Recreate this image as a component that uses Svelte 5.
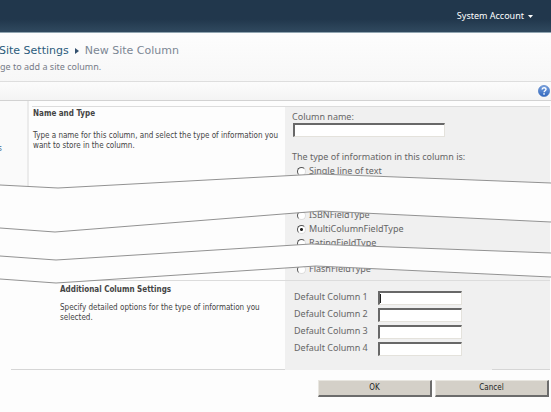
<script>
  let columnName = $state('');
  let fieldType = $state('MultiColumnFieldType');
  let defaults = $state(['', '', '', '']);

  const typeGroups = [
    ['Single line of text'],
    ['ISBNFieldType', 'MultiColumnFieldType', 'RatingFieldType'],
    ['FlashFieldType']
  ];
</script>

<div class="page">
  <header class="topbar">
    <button class="account" type="button">
      System Account
      <svg width="5" height="3" viewBox="0 0 5 3" aria-hidden="true"><path d="M0 0H5L2.500 3Z" fill="#fff" /></svg>
    </button>
  </header>

  <div class="title">
    <nav>
      <a href="#settings">Site Settings</a>
      <svg width="4" height="6" viewBox="0 0 4 6" aria-hidden="true"><path d="M0 0L4 3L0 6Z" fill="#33506e" /></svg>
      <span>New Site Column</span>
    </nav>
    <p>ge to add a site column.</p>
  </div>

  <div class="ribbon">
    <button class="help" type="button" aria-label="Help">
      <svg width="12" height="12" viewBox="0 0 12 12">
        <defs>
          <linearGradient id="ball" x1="0" y1="0" x2="0" y2="1">
            <stop offset="0" stop-color="#7ba3e0" />
            <stop offset="1" stop-color="#2f66bd" />
          </linearGradient>
        </defs>
        <circle cx="6" cy="6" r="5.600" fill="url(#ball)" stroke="#4474bf" stroke-width=".6" />
        <path d="M4.100 4.500C4.100 2.300 8 2.200 8 4.300C8 5.700 6.100 5.700 6.100 7.300" fill="none" stroke="#fff" stroke-width="1.400" />
        <rect x="5.300" y="8.200" width="1.500" height="1.500" fill="#fff" />
      </svg>
    </button>
  </div>

  <div class="body">
    <aside><a href="#lists">s</a></aside>

    <form onsubmit={(e) => e.preventDefault()}>
      <section class="row first">
        <div class="about">
          <h2>Name and Type</h2>
          <p>Type a name for this column, and select the type of information you want to store in the column.</p>
        </div>
        <div class="fields">
          <label class="name" for="column-name">Column name:</label>
          <input class="box wide" id="column-name" type="text" bind:value={columnName} />
          <p class="prompt">The type of information in this column is:</p>
          {#each typeGroups as group}
            <div class="group">
              {#each group as type}
                <label class="option">
                  <input type="radio" name="type" value={type} bind:group={fieldType} />
                  {type}
                </label>
              {/each}
            </div>
          {/each}
        </div>
      </section>

      <section class="row second">
        <div class="about">
          <h2>Additional Column Settings</h2>
          <p>Specify detailed options for the type of information you selected.</p>
        </div>
        <div class="fields">
          {#each defaults as _, i}
            <div class="default">
              <label for="default-{i}">Default Column {i + 1}</label>
              <span class="entry">
                <input class="box" id="default-{i}" type="text" bind:value={defaults[i]} />
                {#if i === 0}<i class="caret"></i>{/if}
              </span>
            </div>
          {/each}
        </div>
      </section>

      <div class="actions">
        <button type="submit">OK</button>
        <button type="button">Cancel</button>
      </div>
    </form>

    <!-- torn paper strips over the shortened list -->
    <svg class="tears" viewBox="0 0 551 120" preserveAspectRatio="none" aria-hidden="true">
      <path class="gap" d="M0 15L58 18L319 4L551 13V52L321 41L55 62L0 58Z" />
      <path class="gap" d="M0 86L56 90L311 74L551 83V107L316 96L56 113L0 109Z" />
      <path class="edge" d="M0 15L58 18L319 4L551 13M0 58L55 62L321 41L551 52M0 86L56 90L311 74L551 83M0 109L56 113L316 96L551 107" />
    </svg>
  </div>
</div>

<style>
  :global(body) {
    margin: 0;
    background: #fdfdfd;
  }
  .page {
    overflow: hidden;
    min-height: 100vh;
    background: #fdfdfd;
    color: #666;
    font: 9px/14px 'Noto Sans', Verdana, sans-serif;
  }
  h2, p {
    margin: 0;
  }
  a {
    text-decoration: none;
  }
  button {
    font: inherit;
    padding: 0;
  }
  svg {
    display: block;
  }
  .topbar {
    display: flex;
    justify-content: flex-end;
    align-items: center;
    box-sizing: border-box;
    height: 33px;
    padding-right: 18px;
    background: linear-gradient(#21374c 60%, #30495f);
    border-bottom: 1px solid #91a5b1;
  }
  .account {
    display: flex;
    align-items: center;
    gap: 4px;
    border: 0;
    background: none;
    color: #fff;
  }
  .title {
    box-sizing: border-box;
    height: 49px;
    padding-top: 9px;
    background: linear-gradient(#fdfdfd, #f7f7f7);
    border-bottom: 1px solid #dedede;
  }
  nav {
    display: flex;
    align-items: center;
    gap: 6px;
    margin-left: -1px;
    font: 11px/17px 'DejaVu Sans', Verdana, sans-serif;
    color: #7b8794;
  }
  nav a {
    color: #2b5c7c;
  }
  .title p {
    line-height: 16px;
    color: #777c88;
  }
  .ribbon {
    display: flex;
    justify-content: flex-end;
    align-items: center;
    box-sizing: border-box;
    height: 19px;
    padding-right: 1px;
    background: linear-gradient(#fcfcfc, #f4f4f4);
    border-bottom: 1px solid #d2d2d2;
  }
  .help {
    border: 0;
    background: none;
  }
  .body {
    position: relative;
    display: flex;
  }
  aside {
    box-sizing: border-box;
    width: 29px;
    height: 86px;
    padding-top: 40px;
    background: #fafafa;
    border-right: 2px solid #ebebeb;
  }
  aside a {
    display: block;
    margin-left: -2px;
    color: #456b96;
    font-size: 8px;
  }
  form {
    flex: 1;
    padding: 5px 1px 0 3px;
  }
  .row {
    display: grid;
    grid-template-columns: minmax(0, 1fr) 265px;
    border-top: 1px solid #dcdcdc;
  }
  .about {
    color: #444;
    font: 8px/10px 'DejaVu Sans Condensed', Tahoma, sans-serif;
  }
  .about h2 {
    font-size: 8px;
    line-height: 12px;
  }
  .fields {
    box-sizing: border-box;
    background: #f0f0f0;
  }
  .first .about {
    padding: 1px 4px 0 1px;
  }
  .first .about p {
    padding-top: 11px;
  }
  .first .fields {
    height: 173px;
    padding: 3px 7px 0;
  }
  .name {
    display: block;
    line-height: 13px;
  }
  .box {
    display: block;
    box-sizing: border-box;
    width: 84px;
    height: 14px;
    padding: 0 2px;
    border: 2px solid;
    border-color: #686868 #e4e2dc #e4e2dc #686868;
    border-right-width: 1px;
    border-bottom-width: 1px;
    background: #fff;
    color: #333;
    font: inherit;
    outline: 0;
  }
  .wide {
    width: 152px;
    margin-left: 1px;
  }
  .prompt {
    padding-top: 13px;
  }
  .group {
    padding-left: 5px;
  }
  .group + .group {
    margin-top: 30px;
  }
  .group + .group + .group {
    margin-top: 12px;
  }
  .option {
    display: flex;
    align-items: center;
    gap: 3px;
  }
  .option input {
    appearance: none;
    box-sizing: border-box;
    width: 9px;
    height: 9px;
    margin: 0;
    border: 1px solid;
    border-color: #555 #ddd #ddd #555;
    border-radius: 50%;
    background: #fff;
  }
  .option input:checked {
    background: radial-gradient(circle, #222 0 1px, #fff 2px);
  }
  .second .about {
    padding: 3px 8px 0 28px;
  }
  .second .about p {
    padding-top: 7px;
  }
  .second .fields {
    display: grid;
    align-content: start;
    gap: 3px;
    height: 89px;
    padding: 10px 8px 0 9px;
  }
  .default {
    display: grid;
    grid-template-columns: 84px auto;
    justify-content: start;
  }
  .default label {
    line-height: 12px;
    white-space: nowrap;
  }
  .entry {
    position: relative;
  }
  .caret {
    position: absolute;
    left: 2px;
    top: 3px;
    width: 1px;
    height: 9px;
    background: #222;
  }
  .second {
    position: relative;
  }
  .second::before,
  .second::after {
    content: '';
    position: absolute;
    bottom: 0;
    height: 1px;
    background: #d6d6d6;
  }
  .second::before {
    left: -21px;
    right: 265px;
  }
  .second::after {
    right: 0;
    width: 58px;
  }
  .actions {
    display: flex;
    justify-content: flex-end;
    gap: 3px;
    padding: 10px 1px 14px 0;
  }
  .actions button {
    box-sizing: border-box;
    width: 114px;
    height: 17px;
    border: 1px solid;
    border-width: 1px 2px 2px 1px;
    border-color: #e8e6e0 #6c6c6c #6c6c6c #e8e6e0;
    background: #d4d0c8;
    color: #222;
    font: 8px/12px 'DejaVu Sans Condensed', Tahoma, sans-serif;
  }
  .tears {
    position: absolute;
    left: 0;
    top: 69px;
    width: 100%;
    height: 120px;
    pointer-events: none;
  }
  .gap {
    fill: #fdfdfd;
  }
  .edge {
    fill: none;
    stroke: #929292;
    vector-effect: non-scaling-stroke;
  }
</style>
